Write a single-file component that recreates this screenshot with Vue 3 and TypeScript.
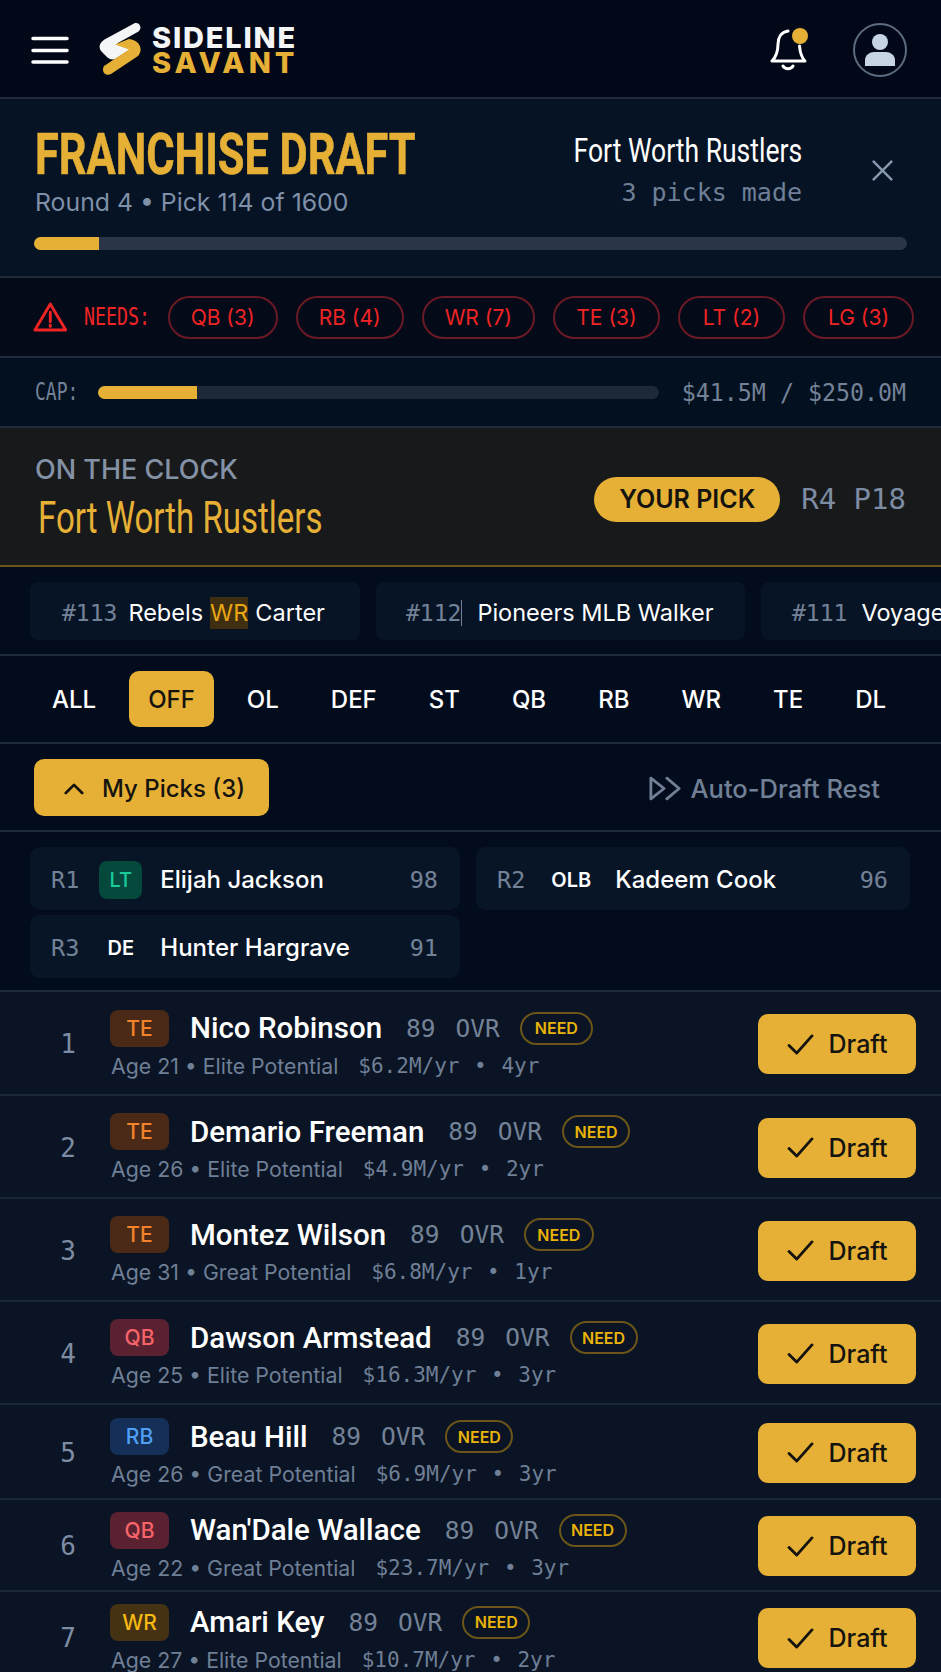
<script setup lang="ts">
interface Prospect {
  rank: number
  pos: string
  name: string
  age: number
  potential: string
  salary: string
  years: string
}

const needs = ['QB (3)', 'RB (4)', 'WR (7)', 'TE (3)', 'LT (2)', 'LG (3)']
const tabs = ['ALL', 'OFF', 'OL', 'DEF', 'ST', 'QB', 'RB', 'WR', 'TE', 'DL']

const myPicks = [
  { round: 'R1', pos: 'LT', name: 'Elijah Jackson', rating: 98 },
  { round: 'R2', pos: 'OLB', name: 'Kadeem Cook', rating: 96 },
  { round: 'R3', pos: 'DE', name: 'Hunter Hargrave', rating: 91 },
]

const prospects: Prospect[] = [
  { rank: 1, pos: 'TE', name: 'Nico Robinson', age: 21, potential: 'Elite', salary: '$6.2M/yr', years: '4yr' },
  { rank: 2, pos: 'TE', name: 'Demario Freeman', age: 26, potential: 'Elite', salary: '$4.9M/yr', years: '2yr' },
  { rank: 3, pos: 'TE', name: 'Montez Wilson', age: 31, potential: 'Great', salary: '$6.8M/yr', years: '1yr' },
  { rank: 4, pos: 'QB', name: 'Dawson Armstead', age: 25, potential: 'Elite', salary: '$16.3M/yr', years: '3yr' },
  { rank: 5, pos: 'RB', name: 'Beau Hill', age: 26, potential: 'Great', salary: '$6.9M/yr', years: '3yr' },
  { rank: 6, pos: 'QB', name: "Wan'Dale Wallace", age: 22, potential: 'Great', salary: '$23.7M/yr', years: '3yr' },
  { rank: 7, pos: 'WR', name: 'Amari Key', age: 27, potential: 'Elite', salary: '$10.7M/yr', years: '2yr' },
]
</script>

<template>
  <div class="page">
    <header class="topbar">
      <svg class="burger" viewBox="0 0 38 28" aria-hidden="true">
        <path d="M2 2.500h34M2 14.500h34M2 26h34" />
      </svg>
      <svg class="mark" viewBox="0 0 44 56" aria-hidden="true">
        <path fill="#f4f5f7" d="M35 1.500c5-2 9 4 4.500 8L18 21.500l13 6-15 9.500c-3 1-5 .5-7.500-1.500L3 30c-4-4-3-9 2.500-12.500z" />
        <path fill="#e5b035" d="M30 17c10 1 15 10 9 17L12 52c-6 3-10-3-7-8l25-16.500-14-5z" />
      </svg>
      <div class="wordmark">
        <span class="wordmark__top">SIDELINE</span>
        <span class="wordmark__bottom">SAVANT</span>
      </div>
      <div class="topbar__right">
        <div class="bell">
          <svg viewBox="0 0 38 44" aria-hidden="true">
            <path d="M18 3c-7 1-10 7-10 13 0 7-1 12-6 17h33c-4-4-5-9-5.500-15M13 38c2 3.500 8 3.500 10 0" />
          </svg>
          <span class="bell__dot"></span>
        </div>
        <div class="avatar">
          <svg viewBox="0 0 30 32" aria-hidden="true">
            <circle cx="15" cy="8" r="8" />
            <path d="M0 32v-6c0-5 5-8 9-8h12c4 0 9 3 9 8v6z" />
          </svg>
        </div>
      </div>
    </header>

    <section class="draft">
      <div class="draft__top">
        <div>
          <h1 class="draft__title">FRANCHISE DRAFT</h1>
          <p class="draft__round">Round 4 • Pick 114 of 1600</p>
        </div>
        <div class="draft__team">
          <div class="draft__team-name">Fort Worth Rustlers</div>
          <div class="draft__team-picks">3 picks made</div>
        </div>
        <svg class="close" viewBox="0 0 24 24" aria-hidden="true">
          <path d="M2 2l20 20M22 2L2 22" />
        </svg>
      </div>
      <div class="bar bar--draft"><span class="bar__fill" style="width: 7.500%"></span></div>
    </section>

    <section class="needs">
      <svg class="needs__icon" viewBox="0 0 36 32" aria-hidden="true">
        <path d="M18 2.500L2 29.500h32z" />
        <path d="M18 11v10M18 24.500v1.500" />
      </svg>
      <span class="needs__label">NEEDS:</span>
      <span v-for="need in needs" :key="need" class="needs__chip">{{ need }}</span>
    </section>

    <section class="cap">
      <span class="cap__label">CAP:</span>
      <div class="bar bar--cap"><span class="bar__fill" style="width: 17.600%"></span></div>
      <span class="cap__value">$41.5M / $250.0M</span>
    </section>

    <section class="clock">
      <div>
        <div class="clock__label">ON THE CLOCK</div>
        <div class="clock__team">Fort Worth Rustlers</div>
      </div>
      <div class="clock__right">
        <span class="clock__pill">YOUR PICK</span>
        <span class="clock__slot">R4 P18</span>
      </div>
    </section>

    <section class="ticker">
      <div class="ticker__card ticker__card--first">
        <span class="ticker__num">#113</span>
        <span>Rebels</span>
        <span class="ticker__pos">WR</span>
        <span>Carter</span>
      </div>
      <div class="ticker__card ticker__card--second">
        <span class="ticker__num ticker__num--clip">#112</span>
        <span>Pioneers MLB Walker</span>
      </div>
      <div class="ticker__card ticker__card--third">
        <span class="ticker__num">#111</span>
        <span>Voyagers</span>
      </div>
    </section>

    <nav class="tabs">
      <button v-for="tab in tabs" :key="tab" type="button" class="tabs__item" :class="{ 'tabs__item--active': tab === 'OFF' }">
        {{ tab }}
      </button>
    </nav>

    <section class="actions">
      <button type="button" class="actions__picks">
        <svg viewBox="0 0 22 14" aria-hidden="true"><path d="M2 12l9-9 9 9" /></svg>
        My Picks (3)
      </button>
      <button type="button" class="actions__auto">
        <svg viewBox="0 0 34 26" aria-hidden="true"><path d="M2 2l14 11L2 24zM19 2l13 11-13 11" /></svg>
        Auto-Draft Rest
      </button>
    </section>

    <section class="picks">
      <div v-for="pick in myPicks" :key="pick.round" class="picks__card">
        <span class="picks__round">{{ pick.round }}</span>
        <span class="picks__pos" :class="{ 'picks__pos--lt': pick.pos === 'LT' }">{{ pick.pos }}</span>
        <span class="picks__name">{{ pick.name }}</span>
        <span class="picks__rating">{{ pick.rating }}</span>
      </div>
    </section>

    <section class="list">
      <article v-for="p in prospects" :key="p.rank" class="row">
        <span class="row__rank">{{ p.rank }}</span>
        <div class="row__main">
          <div class="row__line">
            <span class="row__pos" :class="`row__pos--${p.pos.toLowerCase()}`">{{ p.pos }}</span>
            <span class="row__name">{{ p.name }}</span>
            <span class="row__ovr"><span>89</span><span>OVR</span></span>
            <span class="row__need">NEED</span>
          </div>
          <div class="row__meta">
            <span>Age {{ p.age }} • {{ p.potential }} Potential</span>
            <span class="row__contract">{{ p.salary }} • {{ p.years }}</span>
          </div>
        </div>
        <button type="button" class="row__draft">
          <svg viewBox="0 0 28 22" aria-hidden="true"><path d="M2 12l8 8L26 2" /></svg>
          Draft
        </button>
      </article>
    </section>
  </div>
</template>

<style>
html,
body {
  margin: 0;
  background: #030c1c;
}
</style>

<style scoped>
.page {
  --gold: #e5b035;
  --mono: "DejaVu Sans Mono", "Liberation Mono", monospace;
  --display: Roboto, "Liberation Sans", sans-serif;
  width: 941px;
  height: 1672px;
  overflow: hidden;
  font-family: Inter, "Liberation Sans", sans-serif;
  color: #fff;
  background: #030c1c;
}

.topbar {
  height: 99px;
  box-sizing: border-box;
  display: flex;
  align-items: center;
  padding: 2px 34px 0 31px;
  background: #020817;
  border-bottom: 2px solid #1f2b3b;
}

.burger {
  width: 38px;
  height: 28px;
  fill: none;
  stroke: #fff;
  stroke-width: 3.500;
  stroke-linecap: round;
}

.mark {
  width: 44px;
  height: 56px;
  margin-left: 30px;
}

.wordmark {
  display: flex;
  flex-direction: column;
  margin-left: 9px;
  font-weight: 800;
  line-height: 25px;
  font-size: 29px;
}

.wordmark__top {
  color: #f4f5f7;
  letter-spacing: 1.800px;
}

.wordmark__bottom {
  color: var(--gold);
  letter-spacing: 4px;
}

.topbar__right {
  margin-left: auto;
  display: flex;
  align-items: center;
  gap: 45px;
}

.bell {
  position: relative;
  width: 38px;
  height: 44px;
}

.bell svg {
  width: 38px;
  height: 44px;
  fill: none;
  stroke: #fff;
  stroke-width: 3;
  stroke-linecap: round;
  stroke-linejoin: round;
}

.bell__dot {
  position: absolute;
  top: 0;
  right: 0;
  width: 16px;
  height: 16px;
  border-radius: 50%;
  background: var(--gold);
}

.avatar {
  width: 54px;
  height: 54px;
  box-sizing: border-box;
  border: 2px solid #5d6c80;
  border-radius: 50%;
  display: grid;
  place-items: center;
}

.avatar svg {
  width: 30px;
  height: 32px;
  fill: #c6d4e4;
}

.draft {
  height: 179px;
  box-sizing: border-box;
  padding: 0 34px;
  background: #051325;
  border-bottom: 2px solid #1f2b3b;
}

.draft__top {
  height: 138px;
  display: flex;
  align-items: flex-start;
}

.draft__title {
  width: 377px;
  margin: 31px 0 0 1px;
  font-family: var(--display);
  font-size: 57px;
  line-height: 50px;
  font-weight: 700;
  color: var(--gold);
  white-space: nowrap;
  -webkit-text-stroke: 0.6px var(--gold);
  transform: scaleX(0.76);
  transform-origin: left center;
}

.draft__round {
  margin: 7px 0 0 1px;
  font-size: 24.800px;
  line-height: 30px;
  color: #7f90a8;
}

.draft__team {
  margin: 32px 0 0 auto;
  text-align: right;
}

.draft__team-name {
  font-family: var(--display);
  font-size: 34px;
  line-height: 38px;
  white-space: nowrap;
  transform: scaleX(0.78);
  transform-origin: right center;
}

.draft__team-picks {
  margin-top: 9px;
  font-family: var(--mono);
  font-size: 25px;
  line-height: 30px;
  color: #6f7f96;
}

.close {
  width: 23px;
  height: 23px;
  margin: 60px 13px 0 69px;
  fill: none;
  stroke: #8899b0;
  stroke-width: 2.500;
}

.bar {
  height: 13px;
  overflow: hidden;
  border-radius: 7px;
  background: #2a3647;
}

.bar__fill {
  display: block;
  height: 100%;
  background: var(--gold);
}

.needs {
  height: 80px;
  box-sizing: border-box;
  display: flex;
  align-items: center;
  padding: 0 27px 0 33px;
  background: #050a18;
  border-bottom: 2px solid #1f2b3b;
  color: #f02424;
}

.needs__icon {
  width: 35px;
  height: 32px;
  fill: none;
  stroke: #f02424;
  stroke-width: 3;
  stroke-linejoin: round;
  stroke-linecap: round;
}

.needs__label {
  width: 66px;
  margin: 0 18px 0 16px;
  font-family: var(--mono);
  font-size: 24px;
  transform: scaleX(0.76);
  transform-origin: left center;
}

.needs__chip {
  height: 43px;
  min-width: 107px;
  box-sizing: border-box;
  flex: none;
  display: grid;
  place-items: center;
  padding: 0 21px;
  margin-right: 18px;
  border: 2px solid #6a1a24;
  border-radius: 22px;
  font-size: 21px;
}

.needs__chip:last-child {
  min-width: 111px;
  margin-right: 0;
}

.cap {
  height: 70px;
  box-sizing: border-box;
  display: flex;
  align-items: center;
  padding: 0 35px;
  background: #03101f;
  border-bottom: 2px solid #1f2b3b;
  color: #748297;
  font-family: var(--mono);
}

.cap__label {
  width: 63px;
  font-size: 24px;
  transform: scaleX(0.75);
  transform-origin: left center;
}

.bar--cap {
  width: 561px;
  background: #1d2938;
}

.cap__value {
  margin-left: auto;
  font-size: 24.500px;
  white-space: nowrap;
  transform: scaleX(0.95);
  transform-origin: right center;
}

.clock {
  height: 139px;
  box-sizing: border-box;
  display: flex;
  align-items: center;
  justify-content: space-between;
  padding: 3px 35px 0;
  background: #18191b;
  border-bottom: 2px solid #6b5518;
}

.clock__label {
  font-size: 27px;
  line-height: 30px;
  font-weight: 500;
  color: #8492a6;
}

.clock__team {
  margin: 10px 0 0 3px;
  font-family: var(--display);
  font-size: 44px;
  line-height: 46px;
  color: var(--gold);
  white-space: nowrap;
  transform: scaleX(0.75);
  transform-origin: left center;
}

.clock__right {
  display: flex;
  align-items: center;
  gap: 21px;
  margin-top: 2px;
}

.clock__pill {
  height: 45px;
  width: 186px;
  display: grid;
  place-items: center;
  border-radius: 23px;
  background: var(--gold);
  color: #14130f;
  font-size: 25px;
  font-weight: 600;
}

.clock__slot {
  font-family: var(--mono);
  font-size: 29px;
  color: #7d8ca3;
}

.ticker {
  height: 89px;
  box-sizing: border-box;
  display: flex;
  align-items: center;
  gap: 16px;
  padding-left: 30px;
  overflow: hidden;
  border-bottom: 2px solid #1f2b3b;
  font-size: 23.500px;
}

.ticker__card {
  flex: none;
  height: 58px;
  box-sizing: border-box;
  display: flex;
  align-items: center;
  padding-top: 4px;
  border-radius: 8px;
  background: #071426;
  white-space: nowrap;
}

.ticker__card--first {
  width: 330px;
  padding-left: 32px;
  gap: 7px;
}

.ticker__card--second {
  width: 369px;
  padding-left: 30px;
  gap: 15px;
}

.ticker__card--third {
  width: 400px;
  padding-left: 31px;
  gap: 14px;
}

.ticker__num {
  font-family: var(--mono);
  font-size: 23px;
  color: #748297;
}

.ticker__card--first .ticker__num {
  margin-right: 4px;
}

.ticker__num--clip {
  border-right: 1px solid #748297;
}

.ticker__pos {
  height: 32px;
  line-height: 32px;
  background: #3f2f10;
  color: #e8a614;
}

.tabs {
  height: 88px;
  box-sizing: border-box;
  display: flex;
  align-items: center;
  gap: 14px;
  padding-left: 33px;
  border-bottom: 2px solid #1f2b3b;
}

.tabs__item {
  height: 56px;
  padding: 1px 19px 0;
  border: none;
  border-radius: 10px;
  background: transparent;
  color: #fff;
  font: 500 24px Inter, sans-serif;
}

.tabs__item--active {
  background: var(--gold);
  color: #14130f;
}

.actions {
  height: 88px;
  box-sizing: border-box;
  display: flex;
  align-items: center;
  justify-content: space-between;
  padding: 0 61px 0 34px;
  border-bottom: 2px solid #1f2b3b;
}

.actions button {
  display: flex;
  align-items: center;
  border: none;
  padding-top: 3px;
  font: 500 24px Inter, sans-serif;
}

.actions svg {
  fill: none;
  stroke: currentColor;
  stroke-width: 3;
  stroke-linecap: round;
  stroke-linejoin: round;
}

.actions__picks {
  width: 235px;
  height: 57px;
  gap: 18px;
  padding-left: 30px;
  border-radius: 10px;
  background: var(--gold);
  color: #14130f;
}

.actions__picks svg {
  width: 20px;
  height: 13px;
}

.actions__auto {
  gap: 10px;
  padding-left: 0;
  padding-right: 0;
  background: transparent;
  color: #718096;
}

.actions .actions__auto {
  font-size: 25.500px;
}

.actions__auto svg {
  width: 32px;
  height: 25px;
}

.picks {
  height: 158px;
  box-sizing: border-box;
  display: grid;
  grid-template-columns: 430px 434px;
  grid-template-rows: 63px 63px;
  gap: 5px 16px;
  padding: 15px 0 0 30px;
}

.picks__card {
  display: flex;
  align-items: center;
  padding: 2px 22px 0 21px;
  border-radius: 10px;
  background: #071527;
  font-size: 24px;
}

.picks__round,
.picks__rating {
  font-family: var(--mono);
  font-size: 23.500px;
  color: #748297;
}

.picks__pos {
  min-width: 43px;
  height: 38px;
  box-sizing: border-box;
  margin: 0 18px 0 20px;
  padding: 0 6px;
  display: grid;
  place-items: center;
  border-radius: 8px;
  font-size: 20px;
  font-weight: 600;
}

.picks__pos--lt {
  background: #05493c;
  color: #18c99a;
  font-weight: 500;
}

.picks__name {
  font-weight: 500;
}

.picks__rating {
  margin-left: auto;
}

.list {
  display: grid;
  grid-template-rows: 104px 103px 103px 103px 95px 92px 92px;
  border-top: 2px solid #1f2b3b;
}

.row {
  display: flex;
  align-items: center;
  box-sizing: border-box;
  padding: 2px 25px 0 0;
  background: #0a1424;
  border-bottom: 2px solid #1b2738;
}

.row__rank {
  width: 110px;
  box-sizing: border-box;
  text-align: right;
  font-family: var(--mono);
  font-size: 26px;
  color: #7d8ca3;
  padding-right: 34px;
}

.row__main {
  flex: 1;
  min-width: 0;
}

.row__line {
  display: flex;
  align-items: center;
}

.row__pos {
  width: 59px;
  height: 37px;
  display: grid;
  place-items: center;
  border-radius: 8px;
  font-size: 21px;
  font-weight: 500;
}

.row__pos--te {
  background: #4a2a16;
  color: #f5822a;
}

.row__pos--qb {
  background: #5a2230;
  color: #f8646a;
}

.row__pos--rb {
  background: #143058;
  color: #4f9ff5;
}

.row__pos--wr {
  background: #453212;
  color: #f5b814;
}

.row__name {
  margin-left: 21px;
  font-family: var(--display);
  font-size: 29.500px;
  font-weight: 500;
}

.row__ovr {
  display: flex;
  gap: 20px;
  margin-left: 24px;
  font-family: var(--mono);
  font-size: 24.500px;
  color: #748297;
}

.row__need {
  width: 68px;
  height: 33px;
  box-sizing: border-box;
  display: grid;
  place-items: center;
  margin-left: 20px;
  border: 2px solid #6b5518;
  border-radius: 17px;
  color: #eab308;
  font-size: 16px;
  font-weight: 600;
}

.row:first-child .row__need {
  width: 73px;
}

.row:nth-child(3) .row__need {
  width: 70px;
}

.row__meta {
  display: flex;
  gap: 20px;
  margin: 6px 0 0 1px;
  font-size: 21.300px;
  line-height: 26px;
  color: #6f7f96;
}

.row__contract {
  font-family: var(--mono);
  font-size: 21px;
  word-spacing: 2px;
}

.row__draft {
  width: 158px;
  height: 60px;
  flex: none;
  display: flex;
  align-items: center;
  justify-content: center;
  gap: 15px;
  border: none;
  border-radius: 10px;
  background: var(--gold);
  color: #14130f;
  font: 500 25px Inter, sans-serif;
}

.row__draft svg {
  width: 27px;
  height: 21px;
  fill: none;
  stroke: #14130f;
  stroke-width: 3;
  stroke-linecap: round;
  stroke-linejoin: round;
}
</style>
